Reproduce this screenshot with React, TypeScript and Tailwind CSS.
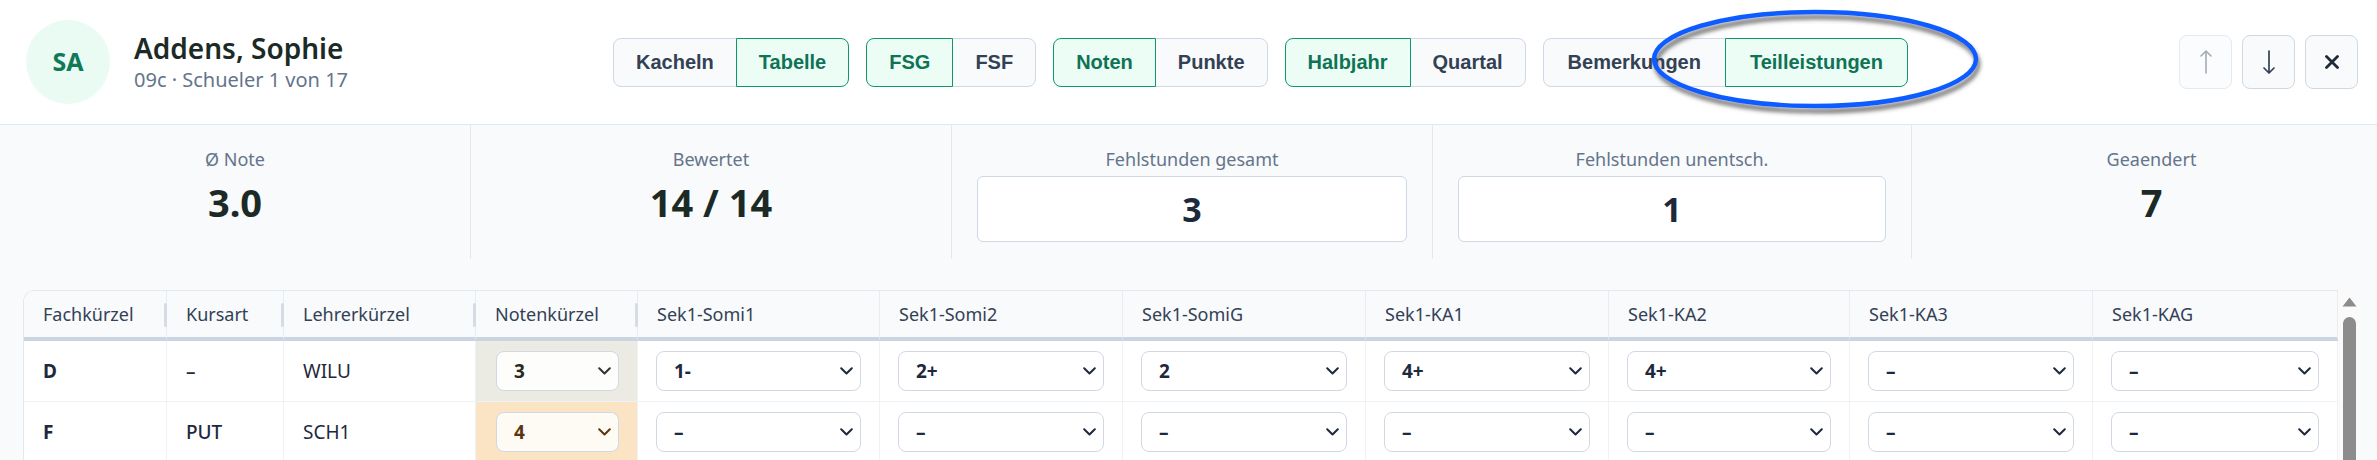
import React from "react";

type Seg = { label: string; active?: boolean };

const groups: Seg[][] = [
    [{ label: "Kacheln" }, { label: "Tabelle", active: true }],
    [{ label: "FSG", active: true }, { label: "FSF" }],
    [{ label: "Noten", active: true }, { label: "Punkte" }],
    [{ label: "Halbjahr", active: true }, { label: "Quartal" }],
    [{ label: "Bemerkungen" }, { label: "Teilleistungen", active: true }],
];

const columns = [
    "Fachkürzel",
    "Kursart",
    "Lehrerkürzel",
    "Notenkürzel",
    "Sek1-Somi1",
    "Sek1-Somi2",
    "Sek1-SomiG",
    "Sek1-KA1",
    "Sek1-KA2",
    "Sek1-KA3",
    "Sek1-KAG",
];

const rows = [
    { fach: "D", kurs: "–", lehrer: "WILU", note: "3", tone: "gray", teil: ["1-", "2+", "2", "4+", "4+", "–", "–"] },
    { fach: "F", kurs: "PUT", lehrer: "SCH1", note: "4", tone: "peach", teil: ["–", "–", "–", "–", "–", "–", "–"] },
];

const Chevron = ({ color = "#1e293b" }: { color?: string }) => (
    <svg width="13" height="8" viewBox="0 0 13 8" fill="none">
        <path d="M1.2 1.2 L6.5 6.5 L11.8 1.2" stroke={color} strokeWidth="2" strokeLinecap="round" strokeLinejoin="round" />
    </svg>
);

const SelectBox = ({
    value,
    bg = "bg-white",
    text = "text-[#1e293b]",
    chevron,
}: {
    value: string;
    bg?: string;
    text?: string;
    chevron?: string;
}) => (
    <div
        className={`flex h-[40px] w-full items-center justify-between rounded-lg border border-[#cfd8e3] pl-[17px] pr-[7px] ${bg}`}
    >
        <span className={`text-[19px] font-bold ${text}`}>{value}</span>
        <Chevron color={chevron} />
    </div>
);

const StatValue = ({ label, value }: { label: string; value: string }) => (
    <div className="flex flex-col items-center pt-[22px]">
        <span className="text-[18px] leading-[25px] text-[#64748b]">{label}</span>
        <span className="mt-[11px] text-[38px] font-bold leading-none text-[#1c2a26]">{value}</span>
    </div>
);

const StatInput = ({ label, value }: { label: string; value: string }) => (
    <div className="flex flex-col items-center px-[25px] pt-[22px]">
        <span className="text-[18px] leading-[25px] text-[#64748b]">{label}</span>
        <div className="mt-[4px] flex h-[66px] w-full items-center justify-center rounded-md border border-[#cfd8e3] bg-white text-[34px] font-bold text-[#1e293b]">
            {value}
        </div>
    </div>
);

export default function App() {
    return (
        <div className="relative h-[460px] w-[2377px] overflow-hidden bg-[#f8fafc] font-['Noto_Sans',sans-serif]">
            {/* header */}
            <header className="flex h-[125px] items-center border-b border-[#e2e8f0] bg-white pl-[26px] pr-[19px]">
                <div className="flex w-[587px] items-center gap-[24px]">
                    <div className="flex h-[84px] w-[84px] items-center justify-center rounded-full bg-[#eafbf3] text-[25px] font-bold text-[#0f7a58]">
                        SA
                    </div>
                    <div className="flex flex-col">
                        <span className="text-[28px] font-semibold leading-[36px] text-[#1c2a26]">Addens, Sophie</span>
                        <span className="text-[20px] leading-[28px] text-[#64748b]">09c · Schueler 1 von 17</span>
                    </div>
                </div>

                <div className="flex items-center gap-[17px] font-['Liberation_Sans',Arial,sans-serif]">
                    {groups.map((g, gi) => (
                        <div key={gi} className="flex">
                            {g.map((s, si) => (
                                <div
                                    key={s.label}
                                    className={`flex h-[49px] items-center border text-[20px] font-bold ${
                                        gi === 4 ? "px-[24px]" : "px-[22px]"
                                    } ${si === 0 ? "rounded-l-lg" : "-ml-px rounded-r-lg"} ${
                                        s.active
                                            ? "relative z-10 border-[#119669] bg-[#ecfdf5] text-[#0f7355]"
                                            : "border-[#cfd8e3] bg-[#f8fafc] text-[#334155]"
                                    }`}
                                >
                                    {s.label}
                                </div>
                            ))}
                        </div>
                    ))}
                </div>

                <div className="ml-auto flex items-center gap-[10px]">
                    <div className="flex h-[54px] w-[53px] items-center justify-center rounded-lg border border-[#e5eaf0] bg-[#fbfcfd]">
                        <svg width="14" height="26" viewBox="0 0 14 26" fill="none">
                            <path d="M7 2 V24 M2 7 L7 2 L12 7" stroke="#a3abb7" strokeWidth="1.6" strokeLinecap="round" strokeLinejoin="round" />
                        </svg>
                    </div>
                    <div className="flex h-[54px] w-[53px] items-center justify-center rounded-lg border border-[#cfd8e3] bg-[#f8fafc]">
                        <svg width="14" height="26" viewBox="0 0 14 26" fill="none">
                            <path d="M7 2 V24 M2 19 L7 24 L12 19" stroke="#334155" strokeWidth="1.7" strokeLinecap="round" strokeLinejoin="round" />
                        </svg>
                    </div>
                    <div className="flex h-[54px] w-[53px] items-center justify-center rounded-lg border border-[#cfd8e3] bg-[#f8fafc]">
                        <svg width="14" height="14" viewBox="0 0 14 14" fill="none">
                            <path d="M1.5 1.5 L12.5 12.5 M12.5 1.5 L1.5 12.5" stroke="#1e293b" strokeWidth="2.8" strokeLinecap="round" />
                        </svg>
                    </div>
                </div>
            </header>

            {/* stats */}
            <div className="grid h-[134px] w-[2391px] grid-cols-[470px_481px_481px_479px_480px]">
                <StatValue label="Ø Note" value="3.0" />
                <div className="border-l border-[#e2e8f0]">
                    <StatValue label="Bewertet" value="14 / 14" />
                </div>
                <div className="border-l border-[#e2e8f0]">
                    <StatInput label="Fehlstunden gesamt" value="3" />
                </div>
                <div className="border-l border-[#e2e8f0]">
                    <StatInput label="Fehlstunden unentsch." value="1" />
                </div>
                <div className="border-l border-[#e2e8f0]">
                    <StatValue label="Geaendert" value="7" />
                </div>
            </div>

            {/* table */}
            <div className="ml-[23px] mr-[16px] mt-[31px] flex">
                <div className="flex-1 overflow-hidden rounded-tl-xl border-l border-t border-[#e2e8f0] bg-white">
                    <div className="grid grid-cols-[143px_117px_192px_162px_242px_243px_243px_243px_241px_243px_1fr]">
                        {columns.map((c, i) => (
                            <div
                                key={c}
                                className="relative flex h-[50px] items-center border-b-4 border-r border-b-[#cbd5e1] border-r-[#e8edf3] bg-[#f8fafc] px-[19px] text-[18px] text-[#334155]"
                            >
                                {c}
                                {i < 4 && (
                                    <span className="absolute right-[-1px] top-[12px] h-[24px] w-[3px] rounded-sm bg-[#d5dce6]" />
                                )}
                            </div>
                        ))}

                        {rows.map((r) => (
                            <React.Fragment key={r.fach}>
                                <div className="flex h-[61px] items-center border-b border-r border-[#eef2f6] px-[19px] text-[19px] font-bold text-[#1e293b]">
                                    {r.fach}
                                </div>
                                <div className="flex h-[61px] items-center border-b border-r border-[#eef2f6] px-[19px] text-[19px] font-medium text-[#1e293b]">
                                    {r.kurs}
                                </div>
                                <div className="flex h-[61px] items-center border-b border-r border-[#eef2f6] px-[19px] text-[19px] text-[#1e293b]">
                                    {r.lehrer}
                                </div>
                                <div
                                    className={`flex h-[61px] items-center border-b border-r border-[#eef2f6] pl-[20px] pr-[18px] ${
                                        r.tone === "gray" ? "bg-[#ebeae3]" : "bg-[#fbe4c4]"
                                    }`}
                                >
                                    {r.tone === "gray" ? (
                                        <SelectBox value={r.note} bg="bg-[#fdfdfb]" text="text-[#2a2a1c]" chevron="#333333" />
                                    ) : (
                                        <SelectBox value={r.note} bg="bg-[#fefbf5]" text="text-[#5a3510]" chevron="#5a3510" />
                                    )}
                                </div>
                                {r.teil.map((t, i) => (
                                    <div
                                        key={i}
                                        className="flex h-[61px] items-center border-b border-r border-[#eef2f6] px-[18px]"
                                    >
                                        <SelectBox value={t} />
                                    </div>
                                ))}
                            </React.Fragment>
                        ))}
                    </div>
                </div>

                {/* scrollbar */}
                <div className="flex w-[23px] flex-col items-center bg-[#fafafa] pt-[7px]">
                    <svg width="15" height="10" viewBox="0 0 15 10">
                        <path d="M7.5 0.5 L14.5 9.5 L0.5 9.5 Z" fill="#8c8c8c" />
                    </svg>
                    <div className="mt-[10px] h-[200px] w-[13px] rounded-t-full bg-[#8c8c8c]" />
                </div>
            </div>

            {/* annotation ellipse */}
            <svg className="pointer-events-none absolute left-[1640px] top-0" width="360" height="125" viewBox="0 0 360 125">
                <defs>
                    <filter id="sh" x="-10%" y="-20%" width="120%" height="150%">
                        <feDropShadow dx="2" dy="5" stdDeviation="2" floodColor="#3f3f3f" floodOpacity="0.75" />
                    </filter>
                </defs>
                <ellipse cx="175" cy="59" rx="161" ry="47" fill="none" stroke="#0b5cff" strokeWidth="4.5" filter="url(#sh)" />
            </svg>
        </div>
    );
}
